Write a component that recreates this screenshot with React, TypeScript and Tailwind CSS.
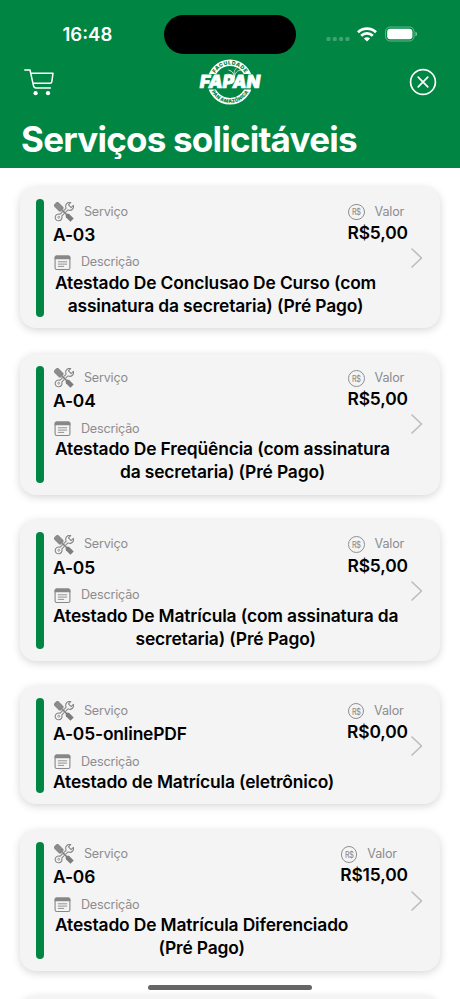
import React from "react";

type Service = {
  code: string;
  price: string;
  indent: string;
  lines: string[];
};

const services: Service[] = [
  {
    code: "A-03",
    price: "R$5,00",
    indent: "ml-[2px]",
    lines: ["Atestado De Conclusao De Curso (com", "assinatura da secretaria) (Pré Pago)"],
  },
  {
    code: "A-04",
    price: "R$5,00",
    indent: "ml-[2px]",
    lines: ["Atestado De Freqüência (com assinatura", "da secretaria) (Pré Pago)"],
  },
  {
    code: "A-05",
    price: "R$5,00",
    indent: "ml-0",
    lines: ["Atestado De Matrícula (com assinatura da", "secretaria) (Pré Pago)"],
  },
  {
    code: "A-05-onlinePDF",
    price: "R$0,00",
    indent: "ml-0",
    lines: ["Atestado de Matrícula (eletrônico)"],
  },
  {
    code: "A-06",
    price: "R$15,00",
    indent: "ml-[2px]",
    lines: ["Atestado De Matrícula Diferenciado", "(Pré Pago)"],
  },
];

function ToolsIcon() {
  return (
    <svg width="20" height="20" viewBox="0 0 20 20" fill="none" className="ml-[0.7px] shrink-0">
      <g transform="rotate(45 10 10)">
        <path
          d="M8.1 -1.4v3.2h3.8v-3.2a3.8 3.8 0 0 1-.2 6.9l-.5.5v8.2l.5.5a3.4 3.4 0 1 1-3.4 0l.5-.5V6l-.5-.5a3.8 3.8 0 0 1-.2-6.9Z"
          stroke="#87878a"
          strokeWidth="1.1"
          strokeLinejoin="round"
        />
        <circle cx="10" cy="17.4" r="1" stroke="#87878a" strokeWidth=".8" />
      </g>
      <g transform="rotate(-45 10 10)">
        <path
          d="M6.9 -1.2q0-1.2 1.2-1.2h3.8q1.2 0 1.2 1.2v7.6l-1.4 1.4H8.3L6.9 6.4Z"
          fill="#87878a"
          stroke="#f4f4f4"
          strokeWidth=".3"
        />
        <path d="M9.1 7.4h1.8v7.1H9.1Z" fill="#7c7c7f" stroke="#f4f4f4" strokeWidth=".3" />
        <path d="M8.5 13.6h3l.8 1.4v6.4H7.7V15Z" fill="#7c7c7f" />
        <path d="M9.1 -1.2v6.5M10.9 -1.2v6.5" stroke="#aaaaac" strokeWidth=".4" />
      </g>
    </svg>
  );
}

function NoteIcon() {
  return (
    <svg width="17" height="16" viewBox="0 0 17 16" fill="none" className="shrink-0">
      <rect x="1.1" y="1.1" width="14.8" height="13.4" rx="1.6" stroke="#87878a" strokeWidth="1.1" />
      <path d="M.6 4.3V2.4Q.6.6 2.4.6h12.2q1.8 0 1.8 1.8v1.9Z" fill="#87878a" />
      <path d="M3.9 6.8h9.2M3.9 9.1h9.2M3.9 11.4h6.2" stroke="#87878a" strokeWidth=".9" />
    </svg>
  );
}

function MoneyIcon() {
  return (
    <span className="ml-[0.7px] flex size-[16.5px] shrink-0 items-center justify-center rounded-full border border-[#8f8f91]">
      <span className="scale-x-[0.8] text-[9px] leading-none font-medium tracking-[-0.5px] text-[#8f8f91]">R$</span>
    </span>
  );
}

function Card({ s }: { s: Service }) {
  return (
    <article className="flex shrink-0 rounded-[16px] bg-[#f4f4f4] pt-[12px] pb-[11.4px] pl-[16px] shadow-[0_2px_8px_rgba(0,0,0,0.17)]">
      <div className="mb-[0.4px] w-[8.4px] shrink-0 rounded-full bg-[#008542]" />
      <div className="ml-[8.6px] w-[355px] shrink-0 pt-[0.6px]">
        <div className="flex h-[54px] justify-between">
          <div>
            <div className="flex h-[24px] items-center">
              <ToolsIcon />
              <span className="mt-[0.6px] ml-[10.3px] text-[12.6px] tracking-[-0.2px] text-[#8c8c8f]">Serviço</span>
            </div>
            <p className="text-[17.4px] leading-[21.4px] font-semibold tracking-[-0.15px]">{s.code}</p>
          </div>
          <div>
            <div className="flex h-[24px] items-center">
              <MoneyIcon />
              <span className="mt-[0.6px] ml-[10px] text-[12.6px] tracking-[-0.2px] text-[#8c8c8f]">Valor</span>
            </div>
            <p className="-mt-px text-[17.4px] leading-[20.6px] font-semibold tracking-[-0.1px]">{s.price}</p>
          </div>
        </div>
        <div className="flex h-[17px] items-center pt-px pl-[0.6px]">
          <NoteIcon />
          <span className="ml-[10.4px] text-[12.6px] tracking-[-0.2px] text-[#8c8c8f]">Descrição</span>
        </div>
        <p
          className={`w-fit text-center text-[17.4px] leading-[23px] font-semibold tracking-[-0.14px] whitespace-nowrap ${s.indent}`}
        >
          {s.lines.map((line) => (
            <span key={line} className="block">
              {line}
            </span>
          ))}
        </p>
      </div>
      <svg width="12" height="20" viewBox="0 0 12 20" fill="none" className="ml-[3.4px] shrink-0 self-center">
        <path d="M1 1l9.5 9L1 19" stroke="#bcbcbe" strokeWidth="1.6" strokeLinecap="round" strokeLinejoin="round" />
      </svg>
    </article>
  );
}

function Logo() {
  return (
    <svg width="64" height="46" viewBox="0 0 64 46" fontFamily="Inter, 'Liberation Sans', sans-serif">
      <defs>
        <path id="arcTop" d="M13.6 23A17.4 17.4 0 0 1 48.4 23" />
        <path id="arcBottom" d="M10.2 23A20.8 20.8 0 0 0 51.8 23" />
      </defs>
      <circle cx="31" cy="23" r="19.2" fill="none" stroke="#fff" strokeWidth="6.6" />
      <text fontSize="5.2" fontWeight="900" fill="#008542" textAnchor="middle" letterSpacing=".5">
        <textPath href="#arcTop" startOffset="50%">
          FACULDADE
        </textPath>
      </text>
      <text fontSize="4.8" fontWeight="900" fill="#008542" textAnchor="middle" letterSpacing=".2">
        <textPath href="#arcBottom" startOffset="50%">
          PAN AMAZÔNICA
        </textPath>
      </text>
      <path d="M2 15h60l-2.4 15.4H-.4Z" fill="#008542" />
      <path
        d="M35.5 19c0-4-2-7-6-8M35.5 19c0-5 3-8 7-8M35.5 19c-1-6 0-8 2-10M35.5 19c-3-4-6-4-9-3.4"
        stroke="#d9ede1"
        strokeWidth=".9"
        fill="none"
      />
      <text
        transform="translate(0 29) skewX(-9)"
        fontSize="18"
        fontWeight="900"
        fill="#fff"
        stroke="#fff"
        strokeWidth=".7"
        textLength="60.3"
        lengthAdjust="spacingAndGlyphs"
      >
        FAPAN
      </text>
    </svg>
  );
}

function Header() {
  return (
    <header className="h-[168px] shrink-0 bg-[#008542] text-white">
      <div className="flex h-[54px] pt-[15px]">
        <span className="ml-[62.5px] w-[101.5px] text-[18.5px] leading-[39px] font-semibold">16:48</span>
        <div className="h-[38.5px] w-[131.5px] rounded-full bg-black" />
        <div className="ml-[30px] flex h-[39px] items-center">
          <svg width="24" height="14" viewBox="0 0 24 14" fill="#fff" fillOpacity=".25" className="mt-[9px]">
            <rect x=".5" y="5" width="4" height="4" rx="1.3" />
            <rect x="6.8" y="5" width="4" height="4" rx="1.3" />
            <rect x="13.1" y="5" width="4" height="4" rx="1.3" />
            <rect x="19.4" y="5" width="4" height="4" rx="1.3" />
          </svg>
          <svg width="20" height="15" viewBox="0 0 20 15" fill="none" stroke="#fff" strokeWidth="2.7" className="ml-[7px]">
            <path d="M1 5.2a12.9 12.9 0 0 1 18 0" />
            <path d="M4.2 8.7a8.3 8.3 0 0 1 11.6 0" />
            <path d="M10 14.6 6.9 11.5a4.4 4.4 0 0 1 6.2 0Z" fill="#fff" stroke="none" />
          </svg>
          <svg width="33" height="16" viewBox="0 0 33 16" fill="none" className="-mt-px ml-[8px]">
            <rect x=".6" y="1" width="28.4" height="14" rx="4.4" stroke="#fff" strokeOpacity=".4" />
            <rect x="2.2" y="2.7" width="25.2" height="10.6" rx="3" fill="#fff" />
            <path d="M30.4 5.6v4.8q1.7-.8 1.7-2.4t-1.7-2.4Z" fill="#fff" fillOpacity=".5" />
          </svg>
        </div>
      </div>
      <div className="flex h-[56px] items-center pr-[23px] pl-[24px]">
        <svg width="31" height="27" viewBox="0 0 31 27" fill="none" stroke="#fff" strokeWidth="1.5" strokeLinecap="round" strokeLinejoin="round">
          <path d="M.8 1h5.2l3.4 15.4q.5 2.6 2.6 2.6h14.4M6.8 4.2h22.2l-1.2 8.6q-.2 1.4-1.8 1.4H9" />
          <circle cx="11.6" cy="24.2" r="2.1" fill="#fff" stroke="none" />
          <circle cx="24" cy="24.2" r="2.1" fill="#fff" stroke="none" />
        </svg>
        <div className="ml-[144px]">
          <Logo />
        </div>
        <svg width="28" height="28" viewBox="0 0 28 28" fill="none" stroke="#fff" strokeWidth="1.7" strokeLinecap="round" className="ml-auto">
          <circle cx="14" cy="14" r="12.4" />
          <path d="M9.2 9.2l9.6 9.6M18.8 9.2l-9.6 9.6" />
        </svg>
      </div>
      <h1 className="pl-[21px] text-[35px] leading-[58px] font-bold tracking-[-0.78px] whitespace-nowrap">
        Serviços solicitáveis
      </h1>
    </header>
  );
}

export default function App() {
  return (
    <div className="relative flex h-[999px] w-[460px] flex-col overflow-hidden bg-white font-['Inter','Liberation_Sans',sans-serif] text-black">
      <Header />
      <main className="flex min-h-0 flex-1 flex-col gap-[25.4px] overflow-hidden px-[20px] pt-[19.3px]">
        {services.map((s) => (
          <Card key={s.code} s={s} />
        ))}
        <div className="h-[141px] shrink-0 rounded-[16px] bg-[#f4f4f4] shadow-[0_2px_8px_rgba(0,0,0,0.17)]" />
      </main>
      <div className="absolute bottom-[9px] left-[148px] h-[5px] w-[164px] rounded-full bg-[#666]" />
    </div>
  );
}
